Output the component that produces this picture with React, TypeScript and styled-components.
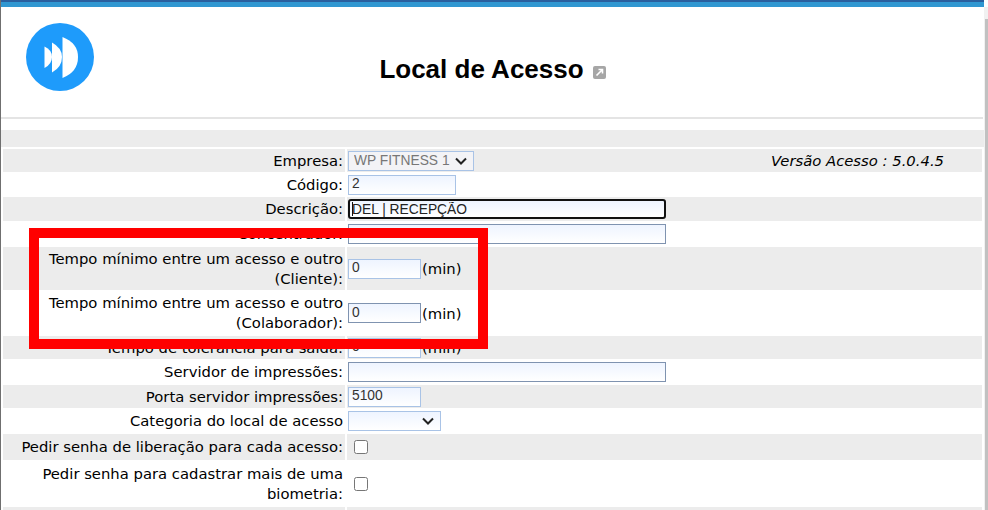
import React from 'react';
import styled, { createGlobalStyle } from 'styled-components';

const GlobalStyle = createGlobalStyle`
  html, body {
    margin: 0;
    padding: 0;
    width: 988px;
    height: 510px;
    overflow: hidden;
    background: #fff;
  }
`;

const chevron =
  "url(\"data:image/svg+xml,%3Csvg xmlns='http://www.w3.org/2000/svg' width='12' height='8'%3E%3Cpath d='M1 1.500 L6 6.500 L11 1.500' fill='none' stroke='%23222' stroke-width='2'/%3E%3C/svg%3E\")";

/** Page */
const Page = styled.div`
  position: relative;
  width: 988px;
  height: 510px;
  overflow: hidden;
  box-sizing: border-box;
  background: #fff;
  border-left: 1px solid #6f6f6f;
  font-family: 'DejaVu Sans', Verdana, sans-serif;
  color: #000;
`;

const TopBar = styled.div`
  height: 5px;
  background: #3097d1;
  border-top: 2px solid #2a5f9e;
  margin-right: 4px;
`;

const Header = styled.header`
  height: 110px;
  display: flex;
  align-items: center;
  padding-left: 25px;
  margin-right: 4px;
`;

const Logo = styled.svg`
  width: 68px;
  height: 68px;
  flex: none;
  margin-top: -10px;
`;

const TitleBox = styled.div`
  flex: 1;
  display: flex;
  align-items: center;
  justify-content: center;
  gap: 9px;
  padding-right: 93px;
  margin-top: 14px;
`;

const Title = styled.h1`
  margin: 0;
  font-family: 'Liberation Sans', Arial, sans-serif;
  font-size: 26px;
  font-weight: 700;
  line-height: 30px;
`;

const ExternalIcon = styled.svg`
  width: 13px;
  height: 13px;
  margin-top: 6px;
`;

const Rule = styled.hr`
  margin: 0 5px 0 0;
  height: 2px;
  border: 0;
  background: #e4e4e4;
  box-sizing: border-box;
`;

const Band = styled.div`
  height: 17px;
  margin: 11px 4px 2px 0;
  background: #ececec;
`;

const Form = styled.div`
  display: grid;
  grid-template-columns: 342px 1fr;
  column-gap: 2px;
  margin: 0 6px 0 2px;
`;

const Label = styled.div<{ $shade?: boolean; $h: number }>`
  height: ${p => p.$h}px;
  display: flex;
  align-items: center;
  justify-content: flex-end;
  box-sizing: border-box;
  padding-right: 2px;
  background: ${p => (p.$shade ? '#ececec' : '#fff')};
  font-size: 14.8px;
  line-height: 20px;
  text-align: right;
  white-space: pre-line;
`;

const Field = styled.div<{ $shade?: boolean; $h: number }>`
  height: ${p => p.$h}px;
  display: flex;
  align-items: center;
  gap: 1px;
  box-sizing: border-box;
  background: ${p => (p.$shade ? '#ececec' : '#fff')};
  padding-left: 1px;
  font-size: 14.8px;
`;

const TextInput = styled.input<{ $w: number; $strong?: boolean }>`
  width: ${p => p.$w}px;
  height: 20px;
  box-sizing: border-box;
  padding: 0 3px 2px;
  margin: 0;
  border: 1px solid ${p => (p.$strong ? '#7f93b0' : '#a9c3e6')};
  border-radius: 0;
  outline: none;
  background: linear-gradient(#eef4ff, #fff);
  font-family: 'Liberation Sans', Arial, sans-serif;
  font-size: 13.8px;
  color: #333;
`;

const FocusWrap = styled.div`
  position: relative;
  display: flex;
  &::before {
    content: '';
    position: absolute;
    left: 4px;
    top: 3px;
    width: 1px;
    height: 14px;
    background: #111;
  }
`;

const FocusedInput = styled(TextInput)`
  padding: 0 2px;
  border: 2px solid #111;
  border-radius: 3px;
  color: #222;
`;

const SelectBox = styled.select<{ $w: number; $off?: boolean }>`
  appearance: none;
  width: ${p => p.$w}px;
  height: 20px;
  box-sizing: border-box;
  margin: 0;
  padding: 0 0 0 5px;
  border: 1px solid #a9c3e6;
  border-radius: 0;
  background: ${chevron} no-repeat right 6px center,
    ${p => (p.$off ? '#f3f3f6' : 'linear-gradient(#eef4ff, #fff)')};
  font-family: 'Liberation Sans', Arial, sans-serif;
  font-size: 13.8px;
  color: ${p => (p.$off ? '#777' : '#000')};
  opacity: 1;
`;

const Check = styled.input`
  width: 14px;
  height: 14px;
  margin: 0 0 0 6px;
`;

const Version = styled.span`
  margin-left: auto;
  margin-right: 38px;
  font-size: 14.8px;
  font-style: italic;
`;

/** Red annotation drawn over the form */
const Highlight = styled.div`
  position: absolute;
  left: 28px;
  top: 228px;
  width: 459px;
  height: 121px;
  box-sizing: border-box;
  border: 10px solid #ff0000;
`;

const ScrollTrack = styled.div`
  position: absolute;
  right: 0;
  top: 7px;
  bottom: 0;
  width: 4px;
  background: #f1f1f1;
`;

const ScrollThumb = styled.div`
  margin: 12px 0 0 1px;
  height: 491px;
  background: #c1c1c1;
`;

const App: React.FC = () => (
  <Page>
    <GlobalStyle />
    <TopBar />
    <Header>
      <Logo viewBox="0 0 68 68">
        <circle cx="34" cy="34" r="34" fill="#1e9bfb" />
        <path d="M18.5 23.5 Q26 27 26 34 Q26 41 18.5 45 Z" fill="#fff" />
        <path d="M26 19.5 Q36 25 36 34 Q36 44 26 49.5 Z" fill="#fff" />
        <path d="M36.500 14 Q52 20 52 34 Q52 49 36.500 55 Z" fill="#fff" />
      </Logo>
      <TitleBox>
        <Title>Local de Acesso</Title>
        <ExternalIcon viewBox="0 0 13 13">
          <rect width="13" height="13" rx="2" fill="#a6a6a6" />
          <path d="M3.500 9.500 L9 4 M5.500 3.500 H9.500 V7.500" stroke="#fff" strokeWidth="1.600" fill="none" />
        </ExternalIcon>
      </TitleBox>
    </Header>
    <Rule />
    <Band />
    <Form>
      <Label $shade $h={23}>Empresa:</Label>
      <Field $shade $h={23}>
        <SelectBox $w={126} $off disabled>
          <option>WP FITNESS 1</option>
        </SelectBox>
        <Version>Versão Acesso : 5.0.4.5</Version>
      </Field>

      <Label $h={25}>Código:</Label>
      <Field $h={25}><TextInput $w={108} defaultValue="2" /></Field>

      <Label $shade $h={24}>Descrição:</Label>
      <Field $shade $h={24}>
        <FocusWrap><FocusedInput $w={318} defaultValue="DEL | RECEPÇÃO" /></FocusWrap>
      </Field>

      <Label $h={26}>Concentrador:</Label>
      <Field $h={26}><TextInput $w={318} $strong /></Field>

      <Label $shade $h={43}>{'Tempo mínimo entre um acesso e outro\n(Cliente):'}</Label>
      <Field $shade $h={43}><TextInput $w={73} defaultValue="0" />(min)</Field>

      <Label $h={46}>{'Tempo mínimo entre um acesso e outro\n(Colaborador):'}</Label>
      <Field $h={46}><TextInput $w={73} $strong defaultValue="0" />(min)</Field>

      <Label $shade $h={23}>Tempo de tolerância para saída:</Label>
      <Field $shade $h={23}><TextInput $w={73} defaultValue="0" />(min)</Field>

      <Label $h={26}>Servidor de impressões:</Label>
      <Field $h={26}><TextInput $w={318} $strong /></Field>

      <Label $shade $h={23}>Porta servidor impressões:</Label>
      <Field $shade $h={23}><TextInput $w={73} defaultValue="5100" /></Field>

      <Label $h={26}>Categoria do local de acesso</Label>
      <Field $h={26}>
        <SelectBox $w={93}><option></option></SelectBox>
      </Field>

      <Label $shade $h={26}>Pedir senha de liberação para cada acesso:</Label>
      <Field $shade $h={26}><Check type="checkbox" /></Field>

      <Label $h={47}>{'Pedir senha para cadastrar mais de uma\nbiometria:'}</Label>
      <Field $h={47}><Check type="checkbox" /></Field>

      <Label $shade $h={10} />
      <Field $shade $h={10} />
    </Form>
    <Highlight />
    <ScrollTrack><ScrollThumb /></ScrollTrack>
  </Page>
);

export default App;
